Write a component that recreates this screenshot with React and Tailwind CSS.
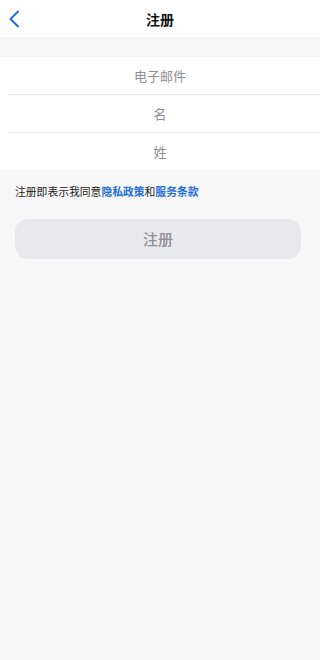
export default function App() {
  const font = { fontFamily: '"Noto Sans CJK SC", "Noto Sans", sans-serif' };
  return (
    <div className="w-[320px] h-[660px] bg-[#f8f8f8] flex flex-col" style={font}>
      <div className="h-[37px] bg-white flex items-center relative">
        <div className="absolute left-[8px] top-[10px]">
          <svg width="12" height="18" viewBox="0 0 12 18" fill="none">
            <path d="M10 1.5L2.5 9L10 16.5" stroke="#1f6fd6" strokeWidth="2" strokeLinecap="round" strokeLinejoin="round" />
          </svg>
        </div>
        <div className="flex-1 text-center text-[14px] font-bold text-[#111] leading-none">注册</div>
      </div>
      <div className="h-[20px] bg-[#f6f6f6]"></div>
      <div className="bg-white">
        <div className="h-[37px] flex items-center justify-center text-[13px] text-[#8e8e93]">电子邮件</div>
        <div className="ml-[8px] h-px bg-[#ececec]"></div>
        <div className="h-[37px] flex items-center justify-center text-[13px] text-[#8e8e93]">名</div>
        <div className="ml-[8px] h-px bg-[#ececec]"></div>
        <div className="h-[37px] flex items-center justify-center text-[13px] text-[#8e8e93]">姓</div>
      </div>
      <div className="px-[15px] pt-[13px] text-[10.8px] text-[#222] leading-[16px]">
        注册即表示我同意<span className="text-[#1f6fd6] font-semibold">隐私政策</span>和<span className="text-[#1f6fd6] font-semibold">服务条款</span>
      </div>
      <div className="px-[15px] pr-[19px] pt-[20px]">
        <div className="h-[40px] rounded-[13px] bg-[#e8e8ed] flex items-center justify-center text-[15px] text-[#8e8e93] font-medium">注册</div>
      </div>
    </div>
  );
}
